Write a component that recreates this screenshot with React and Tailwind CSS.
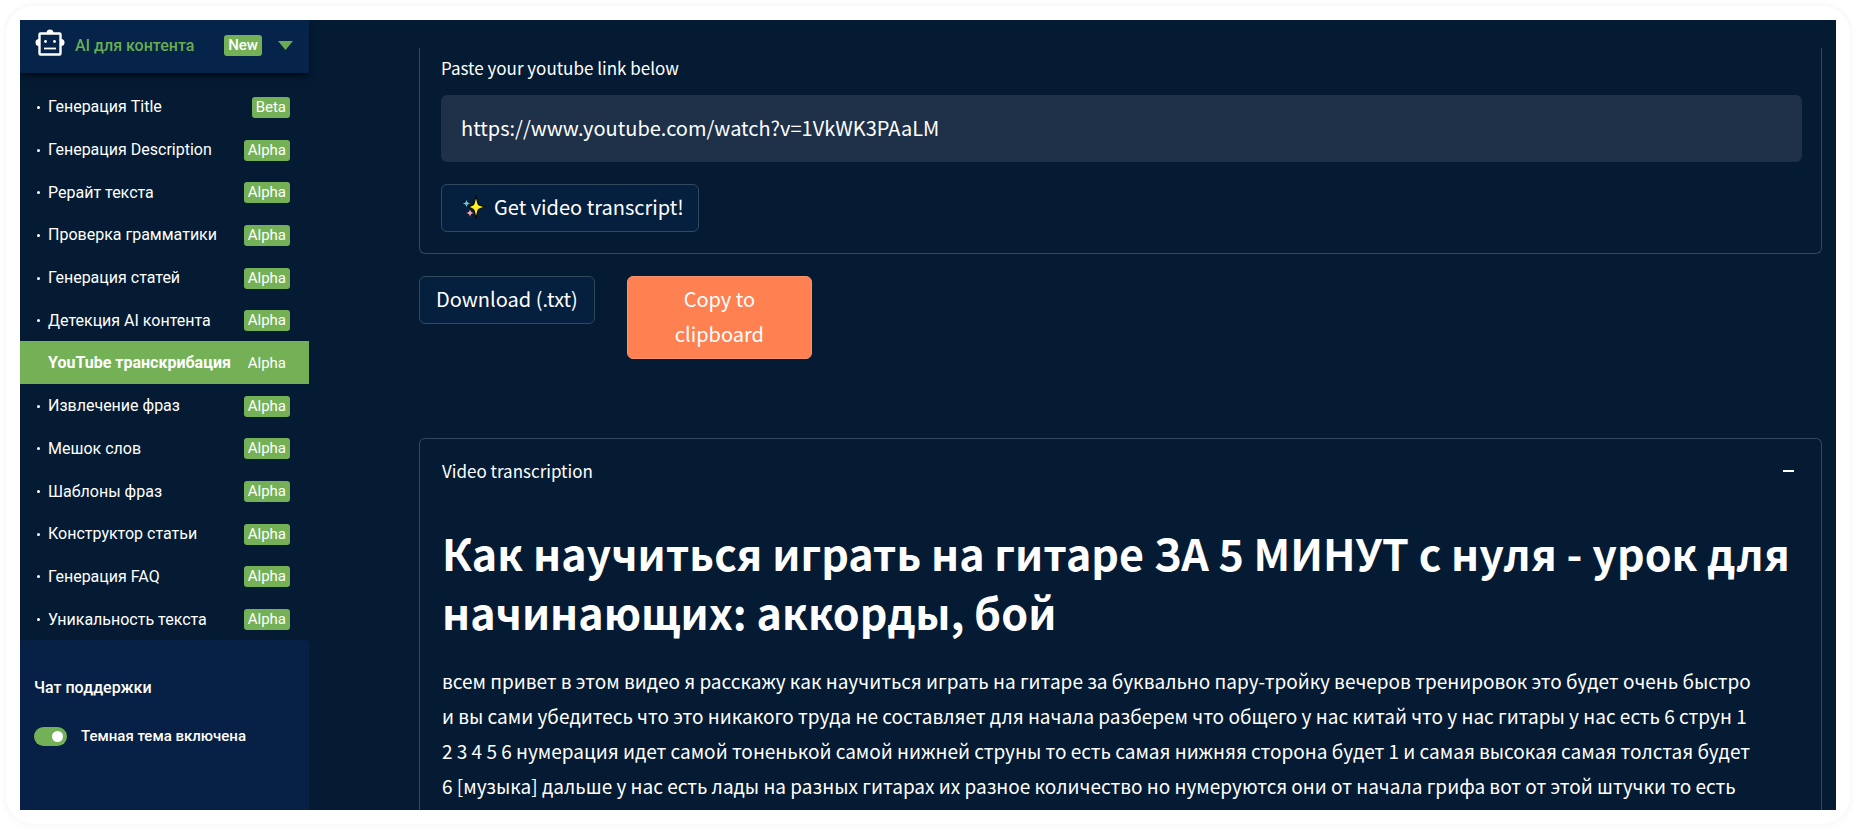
import { useState } from "react";

const menuItems = [
  { label: "Генерация Title", badge: "Beta" },
  { label: "Генерация Description", badge: "Alpha" },
  { label: "Рерайт текста", badge: "Alpha" },
  { label: "Проверка грамматики", badge: "Alpha" },
  { label: "Генерация статей", badge: "Alpha" },
  { label: "Детекция AI контента", badge: "Alpha" },
  { label: "YouTube транскрибация", badge: "Alpha" },
  { label: "Извлечение фраз", badge: "Alpha" },
  { label: "Мешок слов", badge: "Alpha" },
  { label: "Шаблоны фраз", badge: "Alpha" },
  { label: "Конструктор статьи", badge: "Alpha" },
  { label: "Генерация FAQ", badge: "Alpha" },
  { label: "Уникальность текста", badge: "Alpha" },
];

const transcript = [
  "всем привет в этом видео я расскажу как научиться играть на гитаре за буквально пару-тройку вечеров тренировок это будет очень быстро",
  "и вы сами убедитесь что это никакого труда не составляет для начала разберем что общего у нас китай что у нас гитары у нас есть 6 струн 1",
  "2 3 4 5 6 нумерация идет самой тоненькой самой нижней струны то есть самая нижняя сторона будет 1 и самая высокая самая толстая будет",
  "6 [музыка] дальше у нас есть лады на разных гитарах их разное количество но нумеруются они от начала грифа вот от этой штучки то есть",
];

function RobotIcon() {
  return (
    <svg viewBox="0 0 30 27" className="mb-1.5 h-[27px] w-[30px] shrink-0" aria-hidden="true">
      <rect x="4.5" y="4.5" width="21" height="21" rx="1" fill="none" stroke="#fff" strokeWidth="2.4" />
      <path d="M11.500 4a3.500 3.500 0 0 1 7 0zM4 10a3.500 3.500 0 0 0 0 7zM26 10a3.500 3.500 0 0 1 0 7z" fill="#fff" />
      <circle cx="10.5" cy="12.5" r="1.4" fill="#fff" />
      <circle cx="19.5" cy="12.5" r="1.4" fill="#fff" />
      <path d="M9 19.500h12" stroke="#fff" strokeWidth="1.8" />
    </svg>
  );
}

function Sparkles() {
  return (
    <svg viewBox="0 0 24 24" className="h-6 w-6 shrink-0" aria-hidden="true" stroke="#0b0b0b" strokeLinejoin="round">
      <path
        d="M14 .5l1.800 7.500q.5 2 2.500 2.500l5 1.500-5 1.500q-2 .5-2.500 2.500L14 23.500l-1.800-7.500q-.5-2-2.500-2.500l-3-1.500 3-1.500q2-.5 2.500-2.500z"
        fill="#fff01f"
        strokeWidth="1.2"
      />
      <path d="M4.500 4l1.300 3.200L9 8.500 5.800 9.800 4.500 13 3.200 9.800 0 8.500l3.200-1.300z" fill="#5cc8e8" strokeWidth=".7" />
      <path d="M8 13.500l1.300 3.200 3.200 1.300-3.200 1.300L8 22.500l-1.300-3.200L3.500 18l3.200-1.300z" fill="#f5a6c4" strokeWidth=".7" />
    </svg>
  );
}

function Sidebar() {
  const [active, setActive] = useState("YouTube транскрибация");
  const [dark, setDark] = useState(true);

  return (
    <aside className="flex w-[289px] shrink-0 flex-col font-[Roboto,sans-serif] text-white">
      <button className="flex h-[53px] shrink-0 items-center bg-[#06234a] px-4 pb-0.5 pl-[15px] text-left shadow-md shadow-black/50">
        <RobotIcon />
        <span className="ml-2.5 text-base font-medium text-[#68ad51]">AI для контента</span>
        <span className="mr-4 ml-auto rounded-[3px] bg-[#74b156] px-1 text-[15px] leading-[21px] font-medium">New</span>
        <svg viewBox="0 0 15 9" className="h-[9px] w-[15px]" aria-hidden="true">
          <path d="M0 0h15L7.500 9z" fill="#68ad51" />
        </svg>
      </button>

      <ul className="flex flex-1 flex-col pt-3">
        {menuItems.map((item) => {
          const current = item.label === active;
          return (
            <li key={item.label} className="flex flex-1">
              <a
                href="#"
                onClick={() => setActive(item.label)}
                className={`flex flex-1 items-center pt-0.5 pr-[19px] pl-[17px] text-base ${
                  current ? "bg-[#74b156] font-bold" : "font-normal"
                }`}
              >
                <span className={`mr-2 h-[3px] w-[3px] rounded-full ${current ? "" : "bg-white"}`} />
                {item.label}
                <span className="ml-auto rounded-[3px] bg-[#74b156] px-1 text-[15px] leading-[21px] font-normal">
                  {item.badge}
                </span>
              </a>
            </li>
          );
        })}
      </ul>

      <div className="h-[170px] shrink-0 rounded-t-sm bg-[#062145] pt-9 pl-3.5 font-medium">
        <a href="#" className="block text-base leading-6">Чат поддержки</a>
        <label className="mt-6 flex cursor-pointer items-center text-[15px] leading-6">
          <input
            type="checkbox"
            checked={dark}
            onChange={(e) => setDark(e.target.checked)}
            className="peer sr-only"
          />
          <span className="mr-3.5 flex h-[19px] w-[33px] justify-start rounded-full bg-slate-500 p-1 peer-checked:justify-end peer-checked:bg-[#74b156]">
            <span className="h-[11px] w-[11px] rounded-full bg-white" />
          </span>
          Темная тема включена
        </label>
      </div>
    </aside>
  );
}

export default function App() {
  const [url, setUrl] = useState("https://www.youtube.com/watch?v=1VkWK3PAaLM");
  const [open, setOpen] = useState(true);

  return (
    <div className="h-screen bg-white p-1.5">
      <div className="h-full rounded-[28px] bg-white p-3.5 shadow-[0_0_8px_rgba(0,0,0,0.06)]">
        <div className="flex h-full overflow-hidden bg-[#041b33]">
          <Sidebar />

          <main className="min-w-0 flex-1 pt-7 pr-3.5 pl-[110px] font-['Noto_Sans_CJK_SC',sans-serif] text-xl text-white">
            <form
              className="rounded-b-md border-x border-b border-[#33475d] pt-2 pr-[19px] pb-[21px] pl-[21px]"
              onSubmit={(e) => e.preventDefault()}
            >
              <label htmlFor="link" className="block text-[17px] leading-6">
                Paste your youtube link below
              </label>
              <input
                id="link"
                type="text"
                value={url}
                onChange={(e) => setUrl(e.target.value)}
                className="mt-[15px] block h-[67px] w-full rounded-md bg-[#1e3148] px-5 pb-0.5 text-xl outline-none"
              />
              <button className="mt-[22px] flex h-12 items-center gap-2 rounded-md border border-[#33475d] bg-[#05203e] pr-3.5 pb-0.5 pl-5">
                <Sparkles />
                Get video transcript!
              </button>
            </form>

            <div className="mt-[22px] flex items-start gap-8">
              <button className="h-12 rounded-md border border-[#33475d] bg-[#05203e] px-4 pb-0.5">Download (.txt)</button>
              <button className="w-[185px] rounded-md border border-[#f5946f] bg-[#ff8051] px-8 pt-1 pb-[7px] leading-[35px]">
                Copy to clipboard
              </button>
            </div>

            <section className="mt-[79px] rounded-t-md border-x border-t border-[#33475d] pt-5 pr-[19px] pb-5 pl-[22px]">
              <button
                onClick={() => setOpen(!open)}
                className="flex w-full items-center justify-between pr-2 text-[17px] leading-6"
              >
                Video transcription
                <span className="h-0.5 w-[11px] bg-white" />
              </button>
              {open && (
                <div>
                  <h1 className="mt-10 text-[43px] leading-[59px] font-bold">
                    Как научиться играть на гитаре ЗА 5 МИНУТ с нуля - урок для начинающих: аккорды, бой
                  </h1>
                  <p className="mt-[22px] text-[19px] leading-[35px]">
                    {transcript.map((line) => (
                      <span key={line} className="block">{line}</span>
                    ))}
                  </p>
                </div>
              )}
            </section>
          </main>
        </div>
      </div>
    </div>
  );
}
